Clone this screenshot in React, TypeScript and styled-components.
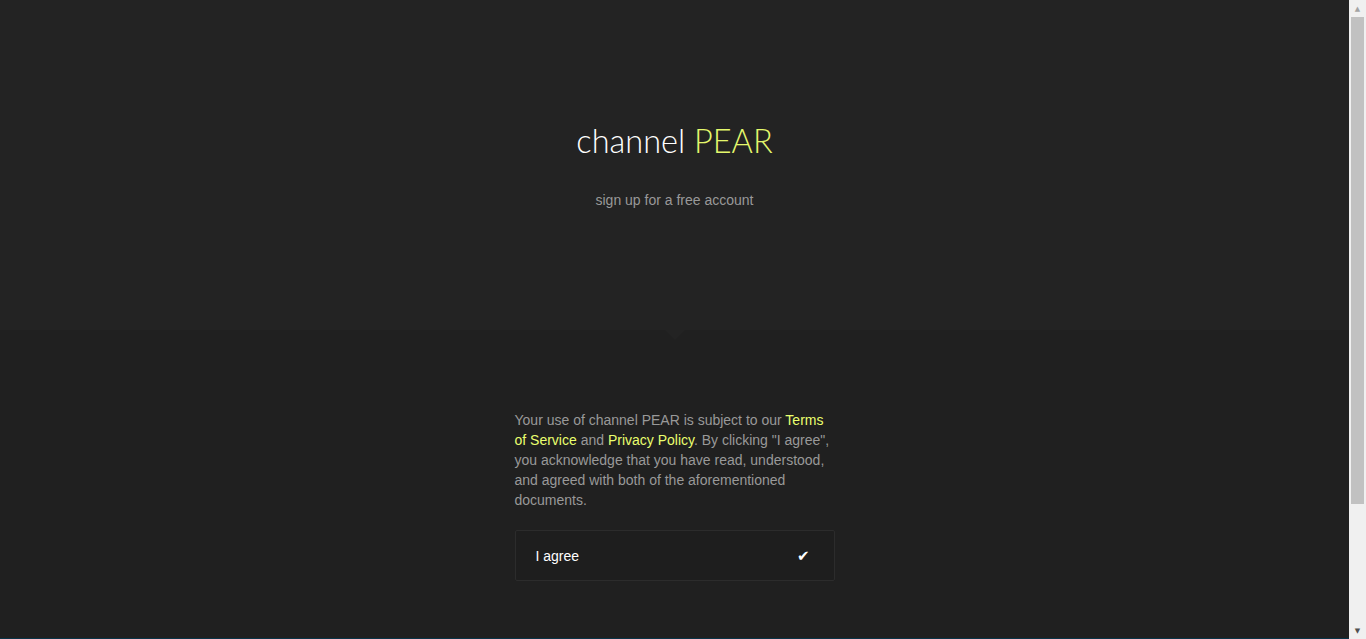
import styled, { createGlobalStyle } from 'styled-components'

const GlobalStyle = createGlobalStyle`
  html, body {
    margin: 0;
    padding: 0;
    background: #202020;
  }
  body {
    font-family: "Liberation Sans", Arial, sans-serif;
    font-size: 14px;
    color: #999;
  }
`;

const App: React.FC = () => {
  return (
    <>
      <GlobalStyle />
      <PageStyle>
        <HeaderStyle>
          <TitleStyle>
            channel <TitleAccentStyle>PEAR</TitleAccentStyle>
          </TitleStyle>
          <SubtitleStyle>sign up for a free account</SubtitleStyle>
          <PointerStyle />
        </HeaderStyle>
        <ContentStyle>
          <TermsStyle>
            Your use of channel PEAR is subject to our <LinkStyle href="#">Terms of Service</LinkStyle> and{' '}
            <LinkStyle href="#">Privacy Policy</LinkStyle>. By clicking "I agree", you acknowledge that you have
            read, understood, and agreed with both of the aforementioned documents.
          </TermsStyle>
          <AgreeButtonStyle type="button">
            <span>I agree</span>
            <CheckStyle>✔</CheckStyle>
          </AgreeButtonStyle>
        </ContentStyle>
        <FooterStyle>
          <FooterTabStyle />
        </FooterStyle>
      </PageStyle>
      <ScrollbarStyle>
        <ScrollArrowStyle $up>▲</ScrollArrowStyle>
        <ScrollTrackStyle>
          <ScrollThumbStyle />
        </ScrollTrackStyle>
        <ScrollArrowStyle>▼</ScrollArrowStyle>
      </ScrollbarStyle>
    </>
  );
};

const PageStyle = styled.div`
  margin-right: 17px;
`;

const HeaderStyle = styled.header`
  position: relative;
  height: 330px;
  box-sizing: border-box;
  padding-top: 121px;
  background-color: #232323;
  display: flex;
  flex-direction: column;
  align-items: center;
`;

const TitleStyle = styled.h1`
  margin: 0;
  font-family: Lato, "Open Sans", sans-serif;
  font-weight: 300;
  font-size: 32.5px;
  line-height: 40px;
  color: #fff;
`;

const TitleAccentStyle = styled.span`
  color: #e4f86c;
`;

const SubtitleStyle = styled.p`
  margin: 29px 0 0;
  line-height: 20px;
  color: #999;
`;

const PointerStyle = styled.div`
  position: absolute;
  left: 50%;
  bottom: -10px;
  margin-left: -10px;
  width: 0;
  height: 0;
  border-left: 10px solid transparent;
  border-right: 10px solid transparent;
  border-top: 10px solid #232323;
`;

const ContentStyle = styled.main`
  width: 320px;
  margin: 0 auto;
  padding: 80px 0 57px;
`;

const TermsStyle = styled.p`
  margin: 0;
  line-height: 20px;
  color: #999;
`;

const LinkStyle = styled.a`
  color: #eaff6e;
  text-decoration: none;
`;

const AgreeButtonStyle = styled.button`
  margin-top: 20px;
  width: 100%;
  box-sizing: border-box;
  display: flex;
  justify-content: space-between;
  align-items: center;
  padding: 15px 24px 14px 20px;
  background: #1e1e1e;
  border: 1px solid #2c2c2c;
  border-radius: 2px;
  font-family: "Liberation Sans", Arial, sans-serif;
  font-size: 14px;
  line-height: 20px;
  color: #fff;
  cursor: pointer;
`;

const CheckStyle = styled.span`
  font-family: "DejaVu Sans", sans-serif;
  font-size: 15px;
  line-height: 20px;
`;

const FooterStyle = styled.footer`
  height: 154px;
  background-color: #0c2230;
  border-top: 1px solid #0a3448;
`;

const FooterTabStyle = styled.div`
  margin-left: 196px;
  width: 47px;
  height: 3px;
  background-color: #0b6aa6;
`;

const ScrollbarStyle = styled.div`
  position: fixed;
  top: 0;
  right: 0;
  bottom: 0;
  width: 17px;
  background: #f0f0f0;
  display: flex;
  flex-direction: column;
`;

const ScrollArrowStyle = styled.div<{ $up?: boolean }>`
  height: 17px;
  display: flex;
  align-items: center;
  justify-content: center;
  font-family: "DejaVu Sans", sans-serif;
  font-size: 7px;
  color: ${({ $up }) => ($up ? '#a3a3a3' : '#505050')};
`;

const ScrollTrackStyle = styled.div`
  flex: 1;
  padding: 0 2px;
`;

const ScrollThumbStyle = styled.div`
  height: 487px;
  background: #c1c1c1;
`;

export default App;
